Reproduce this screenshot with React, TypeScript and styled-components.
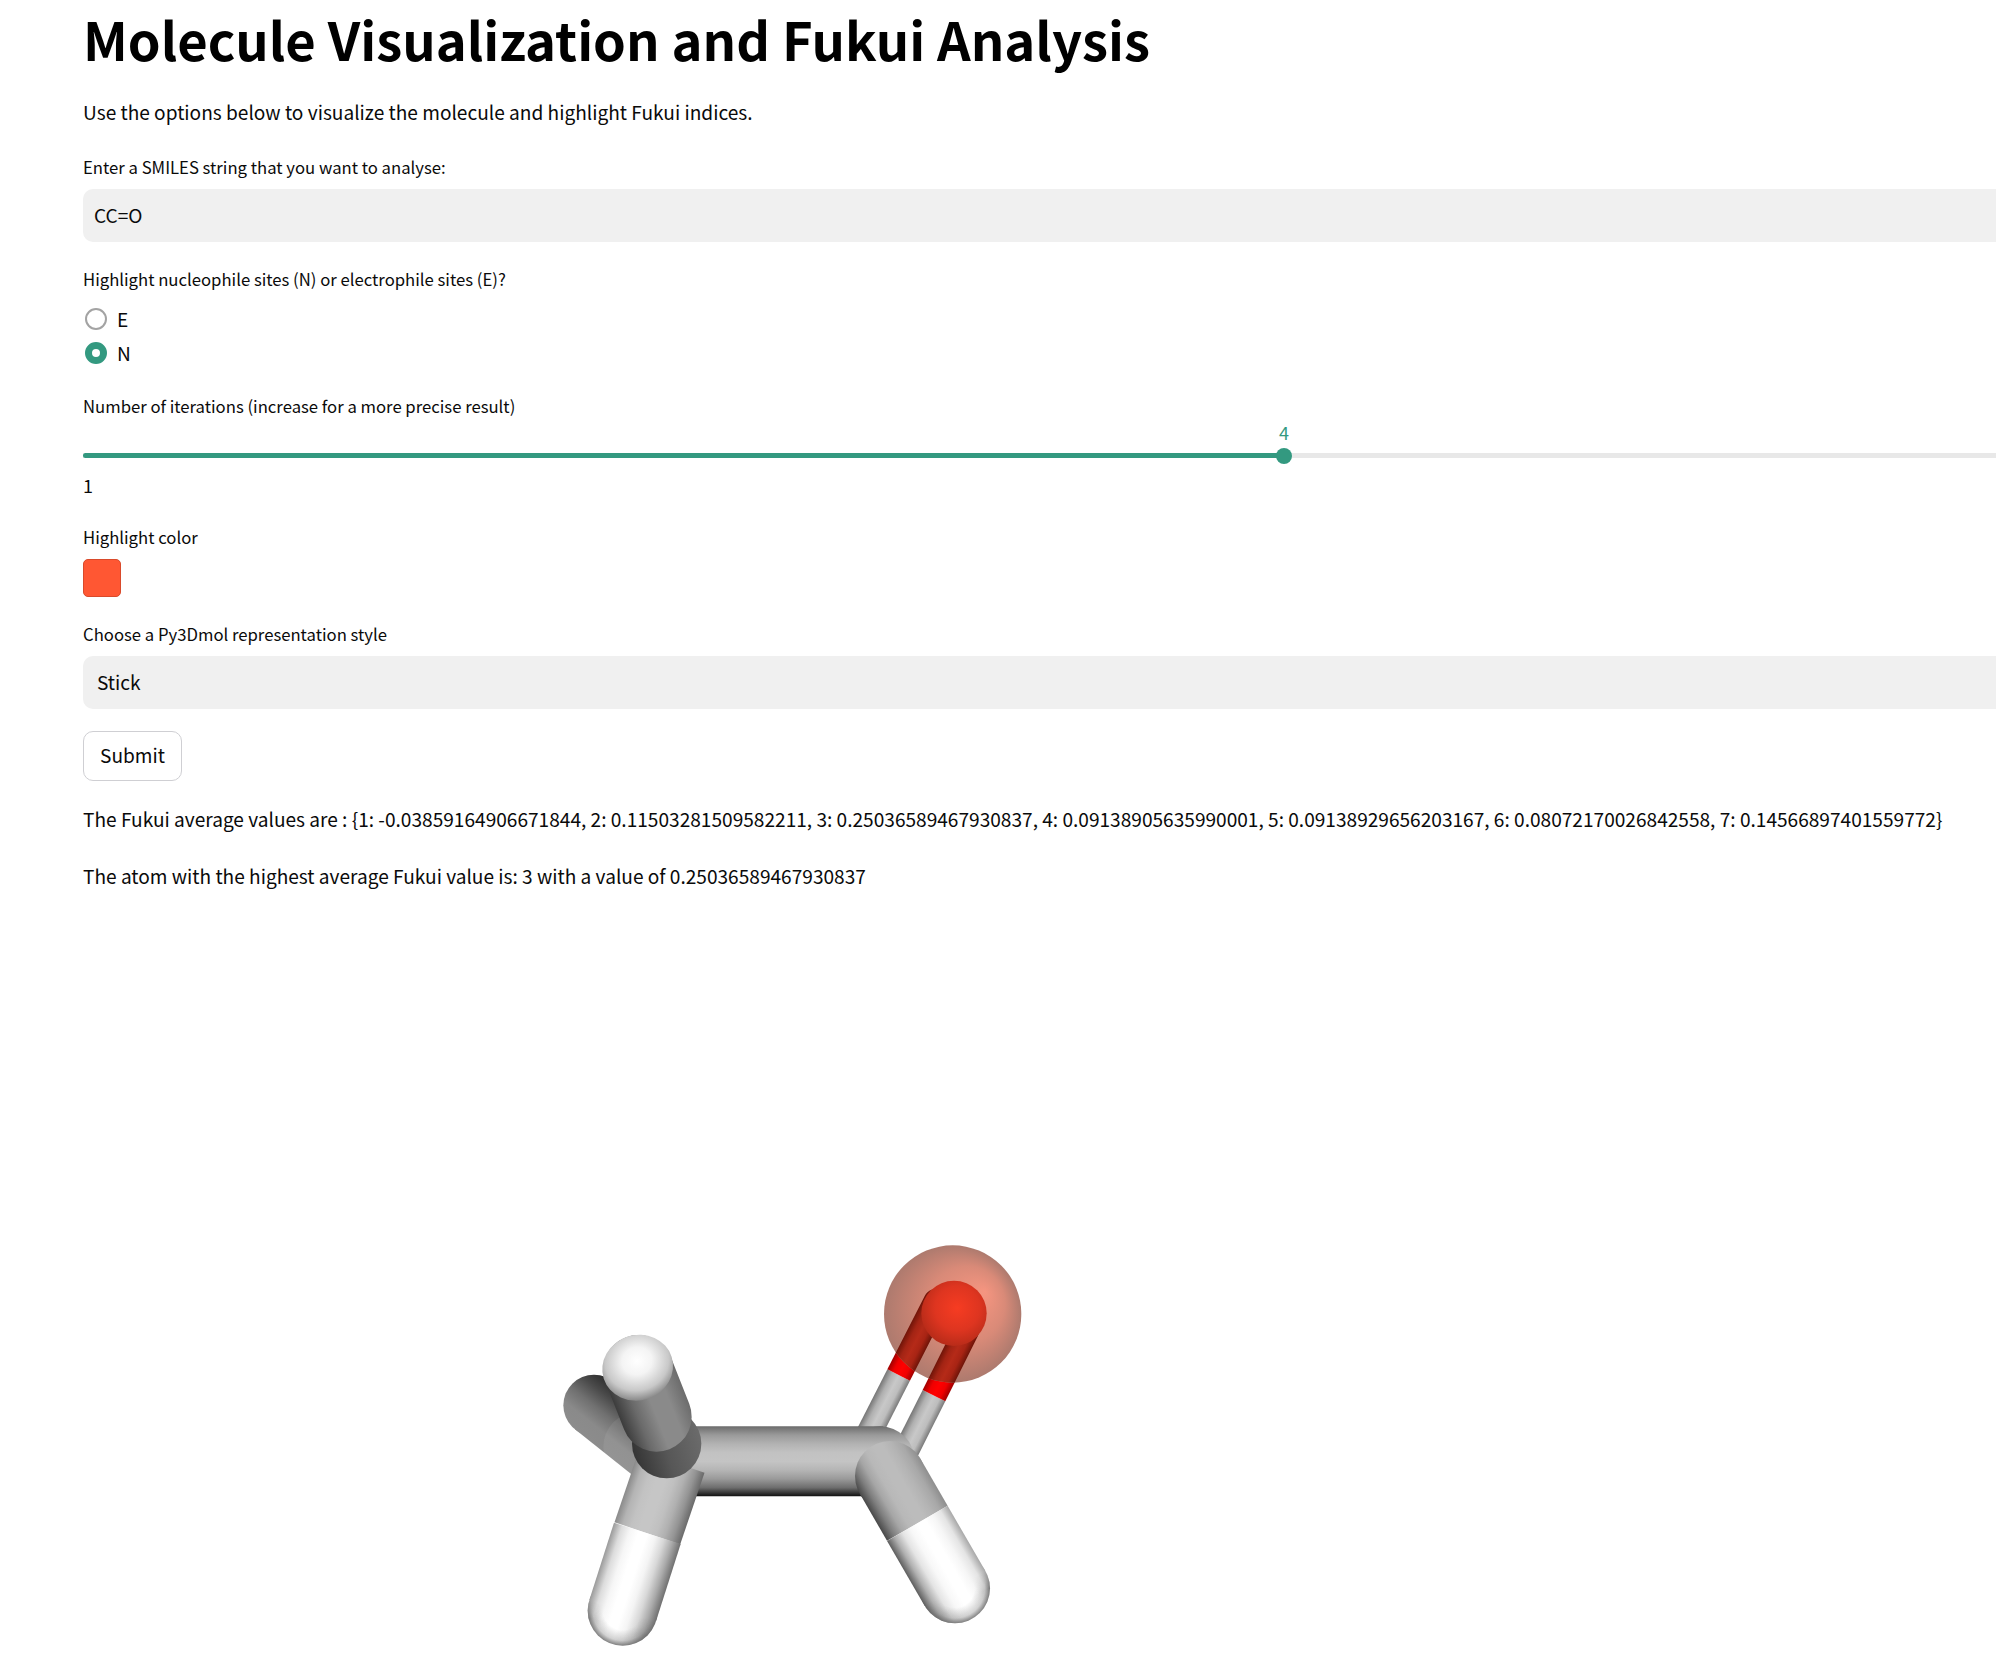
import styled, { createGlobalStyle } from "styled-components"

const GlobalStyle = createGlobalStyle`
  html, body {
    margin: 0;
    padding: 0;
    height: 1674px;
    overflow: hidden;
    background: #fff;
  }
  * { box-sizing: border-box; }
`

const Main = styled.main`
  width: 1996px;
  height: 1674px;
  overflow: hidden;
  padding: 5px 0 0 83px;
  font-family: "Noto Sans CJK JP", "Noto Sans", sans-serif;
  color: #0a0a0a;
`

const Title = styled.h1`
  margin: 0;
  font-size: 52.5px;
  line-height: 66px;
  font-weight: 700;
  color: #000;
  white-space: nowrap;
`

const Paragraph = styled.p<{ $top: number }>`
  margin: ${props => props.$top}px 0 0;
  font-size: 19.1px;
  line-height: 28px;
  white-space: nowrap;
`

const FieldLabel = styled.label<{ $top: number }>`
  display: block;
  margin-top: ${props => props.$top}px;
  font-size: 16.7px;
  line-height: 24px;
  white-space: nowrap;
`

const FilledBox = styled.div<{ $inset: number }>`
  margin-top: 10px;
  height: 53px;
  padding: 12px 0 0 ${props => props.$inset}px;
  background: #f0f0f0;
  border-radius: 10px 0 0 10px;
  font-size: 19.1px;
  line-height: 28px;
`

const RadioGroup = styled.div`
  margin-top: 11px;
`

const RadioRow = styled.div`
  display: flex;
  align-items: center;
  gap: 10px;
  height: 34px;
  padding-left: 2px;
  font-size: 19.1px;
`

const RadioMark = styled.span<{ $checked?: boolean }>`
  width: 22px;
  height: 22px;
  border-radius: 50%;
  background: #fff;
  border: ${props => (props.$checked ? "7px solid #339980" : "2px solid #a3a3a3")};
`

const SliderTrack = styled.div`
  position: relative;
  margin-top: 35px;
  height: 5px;
  background: #e8e8e8;
`

const SliderFill = styled.div<{ $width: number }>`
  width: ${props => props.$width}px;
  height: 100%;
  background: #339980;
  border-radius: 3px 0 0 3px;
`

const SliderThumb = styled.div<{ $left: number }>`
  position: absolute;
  left: ${props => props.$left - 8}px;
  top: -5.5px;
  width: 16px;
  height: 16px;
  border-radius: 50%;
  background: #339980;
`

const SliderValue = styled.div<{ $left: number }>`
  position: absolute;
  left: ${props => props.$left - 20}px;
  top: -33px;
  width: 40px;
  text-align: center;
  font-size: 18px;
  line-height: 24px;
  color: #339980;
`

const SliderMin = styled.div`
  margin-top: 15px;
  font-size: 18px;
  line-height: 24px;
`

const Swatch = styled.div`
  margin-top: 10px;
  width: 38px;
  height: 38px;
  background: #ff5733;
  border: 1px solid #d94a2b;
  border-radius: 5px;
`

const SubmitButton = styled.button`
  display: block;
  margin-top: 22px;
  width: 99px;
  height: 50px;
  padding: 0 0 2px;
  background: #fff;
  border: 1px solid #cfcfd3;
  border-radius: 10px;
  font-family: inherit;
  font-size: 19.1px;
  line-height: 28px;
  color: inherit;
`

const Viewer = styled.svg`
  display: block;
  margin: 330px 0 0 457px;
  width: 500px;
  height: 454px;
`

const thinGrey = ["#7a7a7a", "#bdbdbd", "#c8c8c8", "#b0b0b0", "#767676"]
const red = ["#a00000", "#f00000", "#ff0000", "#f00000", "#a00000"]
const tintRed = ["#6e1408", "#a82414", "#b52a18", "#a32414", "#701408"]

type Point = [number, number]

// gradient runs across the stick, from one edge to the other
const StickShade = ({ id, from, to, r, colors }: { id: string; from: Point; to: Point; r: number; colors: string[] }) => {
  const dx = to[0] - from[0]
  const dy = to[1] - from[1]
  const len = Math.hypot(dx, dy)
  const nx = (-dy / len) * r
  const ny = (dx / len) * r
  return (
    <linearGradient id={id} gradientUnits="userSpaceOnUse" x1={from[0] + nx} y1={from[1] + ny} x2={from[0] - nx} y2={from[1] - ny}>
      {colors.map((c, i) => (
        <stop key={i} offset={i / (colors.length - 1)} stopColor={c} />
      ))}
    </linearGradient>
  )
}

interface IStick {
  id: string
  from: Point
  to: Point
  r: number
  colors: string[]
  caps?: Point[]
}

const mainColors = ["#101010", "#6e6e6e", "#9a9a9a", "#b5b5b5", "#c4c4c4", "#c2c2c2", "#b2b2b2", "#9a9a9a", "#6c6c6c"]

const behind: IStick[] = [
  {
    id: "backH",
    from: [162, 556],
    to: [375, 725],
    r: 92,
    caps: [[162, 556]],
    colors: ["#8c8c8c", "#8a8a8a", "#707070", "#4a4a4a", "#2a2a2a"],
  },
  { id: "bondA", from: [987, 640], to: [1076, 465], r: 38, colors: thinGrey },
  { id: "bondB", from: [1100, 690], to: [1182, 527], r: 38, colors: thinGrey },
]

const front: IStick[] = [
  { id: "main", from: [440, 724], to: [1030, 724], r: 105, colors: mainColors },
  {
    id: "lowerLeftGrey",
    from: [395, 725],
    to: [322, 940],
    r: 104,
    colors: ["#8a8a8a", "#b4b4b4", "#c2c2c2", "#c6c6c6", "#c6c6c6", "#c0c0c0", "#b0b0b0", "#949494", "#6a6a6a"],
  },
  {
    id: "lowerLeftWhite",
    from: [322, 940],
    to: [248, 1172],
    r: 105,
    caps: [[248, 1172]],
    colors: ["#9a9a9a", "#dcdcdc", "#f6f6f6", "#ffffff", "#ffffff", "#f4f4f4", "#d8d8d8", "#aaaaaa", "#707070"],
  },
  {
    id: "lowerRightGrey",
    from: [1050, 768],
    to: [1132, 910],
    r: 105,
    caps: [[1050, 768]],
    colors: ["#484848", "#7e7e7e", "#a6a6a6", "#b8b8b8", "#bcbcbc", "#bcbcbc", "#b4b4b4", "#a8a8a8", "#8e8e8e"],
  },
  {
    id: "lowerRightWhite",
    from: [1132, 910],
    to: [1245, 1105],
    r: 105,
    caps: [[1245, 1105]],
    colors: ["#5e5e5e", "#b0b0b0", "#e4e4e4", "#f8f8f8", "#ffffff", "#ffffff", "#f6f6f6", "#e4e4e4", "#a8a8a8"],
  },
]

const Stick = ({ id, from, to, r, caps }: IStick) => (
  <>
    {caps?.map(c => (
      <circle key={c.join()} cx={c[0]} cy={c[1]} r={r} fill={`url(#${id})`} />
    ))}
    <line x1={from[0]} y1={from[1]} x2={to[0]} y2={to[1]} stroke={`url(#${id})`} strokeWidth={r * 2} />
  </>
)

// white stick ends get a soft grey rim, only on the far half of the cap
const EndRim = ({ id, from, to }: { id: string; from: Point; to: Point }) => {
  const dx = to[0] - from[0]
  const dy = to[1] - from[1]
  const len = Math.hypot(dx, dy)
  return (
    <>
      <defs>
        <linearGradient
          id={`${id}Fade`}
          gradientUnits="userSpaceOnUse"
          x1={to[0]}
          y1={to[1]}
          x2={to[0] + (dx / len) * 50}
          y2={to[1] + (dy / len) * 50}
        >
          <stop offset="0" stopColor="#000" />
          <stop offset="1" stopColor="#fff" />
        </linearGradient>
        <mask id={`${id}Mask`} maskUnits="userSpaceOnUse" x="0" y="0" width="1500" height="1362">
          <rect width="1500" height="1362" fill={`url(#${id}Fade)`} />
        </mask>
      </defs>
      <circle cx={to[0]} cy={to[1]} r="105" fill="url(#rimShade)" mask={`url(#${id}Mask)`} />
    </>
  )
}

const Molecule = () => (
  <Viewer viewBox="0 0 1500 1362">
    <defs>
      {[...behind, ...front].map(s => (
        <StickShade key={s.id} id={s.id} from={s.from} to={s.to} r={s.r} colors={s.colors} />
      ))}
      <StickShade id="bondARed" from={[1076, 465]} to={[1188, 245]} r={38} colors={red} />
      <StickShade id="bondBRed" from={[1182, 527]} to={[1280, 330]} r={38} colors={red} />
      <StickShade id="upper" from={[295, 450]} to={[350, 590]} r={105} colors={["#3c3c3c", "#6a6a6a", "#8a8a8a", "#8a8a8a", "#6c6c6c"]} />
      <StickShade id="tintA" from={[1076, 465]} to={[1188, 245]} r={38} colors={tintRed} />
      <StickShade id="tintB" from={[1182, 527]} to={[1280, 330]} r={38} colors={tintRed} />
      <radialGradient id="rimShade">
        <stop offset="0.55" stopColor="#6a6a6a" stopOpacity="0" />
        <stop offset="0.85" stopColor="#6a6a6a" stopOpacity="0.3" />
        <stop offset="1" stopColor="#6a6a6a" stopOpacity="0.85" />
      </radialGradient>
      <linearGradient id="jointShade" gradientUnits="userSpaceOnUse" x1="280" y1="720" x2="480" y2="660">
        <stop offset="0" stopColor="#333333" />
        <stop offset="0.5" stopColor="#575757" />
        <stop offset="1" stopColor="#6a6a6a" />
      </linearGradient>
      <mask id="backOnly" maskUnits="userSpaceOnUse" x="0" y="0" width="1500" height="1362">
        <line x1="162" y1="556" x2="375" y2="725" stroke="#fff" strokeWidth="184" strokeLinecap="round" />
      </mask>
      <radialGradient id="topCap" cx="0.52" cy="0.4" r="0.6">
        <stop offset="0" stopColor="#ffffff" />
        <stop offset="0.35" stopColor="#f4f4f4" />
        <stop offset="0.75" stopColor="#c8c8c8" />
        <stop offset="1" stopColor="#8a8a8a" />
      </radialGradient>
      <radialGradient id="halo" cx="1238" cy="282" r="206" fx="1335" fy="215" gradientUnits="userSpaceOnUse">
        <stop offset="0" stopColor="#f59580" />
        <stop offset="0.55" stopColor="#d98a78" />
        <stop offset="1" stopColor="#ad7a6e" />
      </radialGradient>
      <radialGradient id="oxygen" cx="0.55" cy="0.42" r="0.62">
        <stop offset="0" stopColor="#f63c22" />
        <stop offset="0.55" stopColor="#de3520" />
        <stop offset="1" stopColor="#b32a18" />
      </radialGradient>
      <linearGradient id="cornerFill" gradientUnits="userSpaceOnUse" x1="0" y1="619" x2="0" y2="829">
        {[...mainColors].reverse().map((c, i) => (
          <stop key={i} offset={i / (mainColors.length - 1)} stopColor={c} />
        ))}
      </linearGradient>
      <clipPath id="haloClip">
        <circle cx="1238" cy="282" r="206" />
      </clipPath>
    </defs>

    {behind.map(s => (
      <Stick key={s.id} {...s} />
    ))}
    <circle cx="295" cy="680" r="105" fill="#fff" fillOpacity="0.07" mask="url(#backOnly)" />

    <line x1="1076" y1="465" x2="1188" y2="245" stroke="url(#bondARed)" strokeWidth="76" />
    <line x1="1182" y1="527" x2="1280" y2="330" stroke="url(#bondBRed)" strokeWidth="76" />
    <circle cx="1238" cy="282" r="206" fill="url(#halo)" />
    <g clipPath="url(#haloClip)">
      <line x1="1076" y1="465" x2="1188" y2="245" stroke="url(#tintA)" strokeWidth="76" strokeLinecap="round" />
      <line x1="1182" y1="527" x2="1280" y2="330" stroke="url(#tintB)" strokeWidth="76" strokeLinecap="round" />
    </g>
    <circle cx="1242" cy="280" r="98" fill="url(#oxygen)" />

    <circle cx="1020" cy="724" r="105" fill="url(#cornerFill)" />
    {front.map(s => (
      <Stick key={s.id} {...s} />
    ))}
    <EndRim id="leftEnd" from={[322, 940]} to={[248, 1172]} />
    <EndRim id="rightEnd" from={[1132, 910]} to={[1245, 1105]} />

    <circle cx="380" cy="671" r="104" fill="url(#jointShade)" />
    <line x1="295" y1="450" x2="350" y2="590" stroke="url(#upper)" strokeWidth="210" strokeLinecap="round" />
    <ellipse cx="293" cy="443" rx="107" ry="98" transform="rotate(-18 293 443)" fill="url(#topCap)" />
  </Viewer>
)

const App = () => (
  <>
    <GlobalStyle />
    <Main>
      <Title>Molecule Visualization and Fukui Analysis</Title>
      <Paragraph $top={27}>Use the options below to visualize the molecule and highlight Fukui indices.</Paragraph>

      <FieldLabel $top={29}>Enter a SMILES string that you want to analyse:</FieldLabel>
      <FilledBox $inset={11}>CC=O</FilledBox>

      <FieldLabel $top={25}>Highlight nucleophile sites (N) or electrophile sites (E)?</FieldLabel>
      <RadioGroup>
        <RadioRow>
          <RadioMark />E
        </RadioRow>
        <RadioRow>
          <RadioMark $checked />N
        </RadioRow>
      </RadioGroup>

      <FieldLabel $top={24}>Number of iterations (increase for a more precise result)</FieldLabel>
      <SliderTrack>
        <SliderFill $width={1201} />
        <SliderThumb $left={1201} />
        <SliderValue $left={1201}>4</SliderValue>
      </SliderTrack>
      <SliderMin>1</SliderMin>

      <FieldLabel $top={28}>Highlight color</FieldLabel>
      <Swatch />

      <FieldLabel $top={25}>Choose a Py3Dmol representation style</FieldLabel>
      <FilledBox $inset={14}>Stick</FilledBox>

      <SubmitButton>Submit</SubmitButton>

      <Paragraph $top={24}>
        {"The Fukui average values are : {1: -0.03859164906671844, 2: 0.11503281509582211, 3: 0.25036589467930837, 4: 0.09138905635990001, 5: 0.09138929656203167, 6: 0.08072170026842558, 7: 0.14566897401559772}"}
      </Paragraph>
      <Paragraph $top={29}>The atom with the highest average Fukui value is: 3 with a value of 0.25036589467930837</Paragraph>

      <Molecule />
    </Main>
  </>
)

export default App
